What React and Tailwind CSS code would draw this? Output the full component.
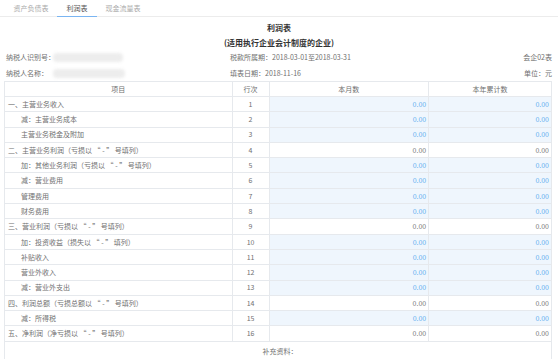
import React from "react";

const rows = [
  { n: 1, label: "一、主营业务收入", indent: false, blue: true },
  { n: 2, label: "减：主营业务成本", indent: true, blue: true },
  { n: 3, label: "主营业务税金及附加", indent: true, blue: true },
  { n: 4, label: "二、主营业务利润（亏损以 “ - ” 号填列）", indent: false, blue: false },
  { n: 5, label: "加：其他业务利润（亏损以 “ - ” 号填列）", indent: true, blue: true },
  { n: 6, label: "减：营业费用", indent: true, blue: true },
  { n: 7, label: "管理费用", indent: true, blue: true },
  { n: 8, label: "财务费用", indent: true, blue: true },
  { n: 9, label: "三、营业利润（亏损以 “ - ” 号填列）", indent: false, blue: false },
  { n: 10, label: "加：投资收益（损失以 “ - ” 填列）", indent: true, blue: true },
  { n: 11, label: "补贴收入", indent: true, blue: true },
  { n: 12, label: "营业外收入", indent: true, blue: true },
  { n: 13, label: "减：营业外支出", indent: true, blue: true },
  { n: 14, label: "四、利润总额（亏损总额以 “ - ” 号填列）", indent: false, blue: false },
  { n: 15, label: "减：所得税", indent: true, blue: true },
  { n: 16, label: "五、净利润（净亏损以 “ - ” 号填列）", indent: false, blue: false },
];

export default function App() {
  return (
    <div
      className="w-[558px] h-[359px] overflow-hidden bg-white text-[7px] text-[#707070]"
      style={{ fontFamily: '"Noto Sans CJK SC", "Noto Sans", sans-serif' }}
    >
      {/* tabs */}
      <div className="h-[17px] border-b border-[#ececec] flex items-stretch pl-[5px]">
        <div className="w-[52px] flex items-center justify-center text-[#aaa] text-[7px]">资产负债表</div>
        <div className="w-[40px] flex items-center justify-center text-[#555] text-[7px] border-b-[1.5px] border-[#7ab5f2] -mb-px">利润表</div>
        <div className="w-[52px] flex items-center justify-center text-[#aaa] text-[7px]">现金流量表</div>
      </div>

      <div className="mt-[5px] h-[12px] flex items-center justify-center font-bold text-[8px] text-[#333]">利润表</div>
      <div className="mt-[3px] h-[12px] flex items-center justify-center font-bold text-[8px] text-[#333]">(适用执行企业会计制度的企业)</div>

      <div className="mt-[2px] h-[12px] flex items-center px-[6px]">
        <div className="w-[224px] flex items-center">
          <span>纳税人识别号：</span>
          <span className="ml-[-2px] w-[70px] h-[9px] bg-[#ededed] blur-[1.5px] rounded-sm" />
        </div>
        <div className="flex-1">税款所属期：2018-03-01至2018-03-31</div>
        <div>会企02表</div>
      </div>
      <div className="mt-[4px] h-[12px] flex items-center px-[6px]">
        <div className="w-[224px] flex items-center">
          <span>纳税人名称：</span>
          <span className="ml-[5px] w-[72px] h-[9px] bg-[#ededed] blur-[1.5px] rounded-sm" />
        </div>
        <div className="flex-1">填表日期：2018-11-16</div>
        <div>单位：元</div>
      </div>

      {/* table */}
      <div className="mt-[2px] ml-[4px] w-[548px] border-t border-l border-[#e6e9ed]">
        <div className="h-[15px] flex border-b border-[#e6e9ed]">
          <div className="w-[228px] border-r border-[#e6e9ed] flex items-center justify-center">项目</div>
          <div className="w-[37px] border-r border-[#e6e9ed] flex items-center justify-center">行次</div>
          <div className="w-[160px] border-r border-[#e6e9ed] flex items-center justify-center">本月数</div>
          <div className="w-[123px] border-r border-[#e6e9ed] flex items-center justify-center">本年累计数</div>
        </div>
        {rows.map((r) => (
          <div key={r.n} className="h-[15.3px] flex border-b border-[#e6e9ed]">
            <div className={`w-[228px] border-r border-[#e6e9ed] flex items-center ${r.indent ? "pl-[16px]" : "pl-[3px]"}`}>
              {r.label}
            </div>
            <div className="w-[37px] border-r border-[#e6e9ed] flex items-center justify-center">{r.n}</div>
            <div
              className={`w-[160px] border-r border-[#e6e9ed] flex items-center justify-end pr-[2px] ${
                r.blue ? "bg-[#eff6fd] text-[#62aef0]" : "bg-white text-[#777]"
              }`}
            >
              0.00
            </div>
            <div
              className={`w-[123px] border-r border-[#e6e9ed] flex items-center justify-end pr-[2px] ${
                r.blue ? "bg-[#eff6fd] text-[#62aef0]" : "bg-white text-[#777]"
              }`}
            >
              0.00
            </div>
          </div>
        ))}
        <div className="h-[22px] border-r border-[#e6e9ed] flex items-start justify-center pt-[4px] pl-[4px]">
          补充资料：
        </div>
      </div>
    </div>
  );
}
